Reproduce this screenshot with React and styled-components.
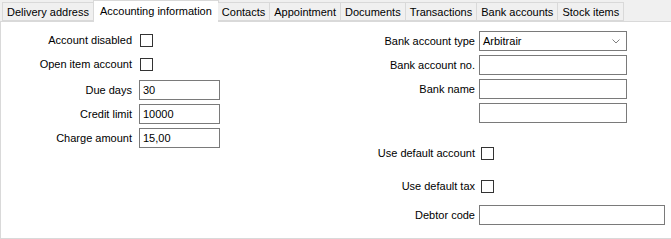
import React from "react";
import styled, { createGlobalStyle } from "styled-components";

const GlobalStyle = createGlobalStyle`
  html, body {
    margin: 0;
    padding: 0;
    background: #f0f0f0;
  }
  body {
    font-family: "Liberation Sans", Arial, sans-serif;
    font-size: 11px;
    letter-spacing: 0;
    color: #000;
  }
`;

const Window = styled.div`
  width: 671px;
  height: 239px;
  background: #f0f0f0;
  display: flex;
  flex-direction: column;
  overflow: hidden;
`;

const TabBar = styled.div`
  display: flex;
  align-items: flex-end;
  height: 21px;
  padding-left: 2px;
  position: relative;
  z-index: 1;
`;

const Tab = styled.div`
  box-sizing: border-box;
  height: ${(p) => (p.active ? "22px" : "19px")};
  margin-bottom: ${(p) => (p.active ? "-1px" : "0")};
  margin-left: ${(p) => (p.active ? "-1px" : "0")};
  margin-right: ${(p) => (p.active ? "-1px" : "0")};
  padding: 0 ${(p) => (p.active ? "6px" : "4px")};
  display: flex;
  align-items: center;
  padding-bottom: ${(p) => (p.active ? "2px" : "0")};
  background: ${(p) => (p.active ? "#fff" : "#f0f0f0")};
  border: 1px solid #d9d9d9;
  border-bottom: ${(p) => (p.active ? "none" : "1px solid #d9d9d9")};
  border-left: ${(p) => (p.first || p.active ? "1px solid #d9d9d9" : "none")};
  white-space: nowrap;
`;

const Panel = styled.div`
  flex: 1;
  background: #fff;
  border: 1px solid #d9d9d9;
  border-right: none;
  display: flex;
`;

const Column = styled.div`
  width: ${(p) => p.width}px;
  padding-top: ${(p) => p.top}px;
  display: flex;
  flex-direction: column;
`;

const Row = styled.div`
  display: flex;
  align-items: center;
  height: 20px;
  margin-top: ${(p) => p.gap || 0}px;
`;

const Label = styled.div`
  width: ${(p) => p.width}px;
  text-align: right;
  padding-right: ${(p) => p.space}px;
  box-sizing: border-box;
  flex-shrink: 0;
  white-space: nowrap;
`;

const Input = styled.div`
  box-sizing: border-box;
  width: ${(p) => p.width}px;
  height: 20px;
  border: 1px solid #7a7a7a;
  background: #fff;
  padding: 0 3px;
  display: flex;
  align-items: center;
`;

const Select = styled(Input)`
  justify-content: space-between;
  padding-right: 6px;
`;

const Check = styled.div`
  box-sizing: border-box;
  width: 13px;
  height: 13px;
  border: 1px solid #333;
  background: #fff;
  margin-left: ${(p) => p.offset || 0}px;
`;

const Chevron = () => (
  <svg width="8" height="5" viewBox="0 0 8 5">
    <path d="M0.5 0.5 L4 4 L7.5 0.5" fill="none" stroke="#808080" strokeWidth="1" />
  </svg>
);

const tabs = [
  "Delivery address",
  "Accounting information",
  "Contacts",
  "Appointment",
  "Documents",
  "Transactions",
  "Bank accounts",
  "Stock items",
];

export default function App() {
  return (
    <>
      <GlobalStyle />
      <Window>
        <TabBar>
          {tabs.map((t, i) => (
            <Tab key={t} first={i === 0} active={i === 1}>
              {t}
            </Tab>
          ))}
        </TabBar>
        <Panel>
          <Column width={299} top={8}>
            <Row>
              <Label width={138} space={7}>Account disabled</Label>
              <Check offset={1} />
            </Row>
            <Row gap={4}>
              <Label width={138} space={7}>Open item account</Label>
              <Check offset={1} />
            </Row>
            <Row gap={6}>
              <Label width={138} space={7}>Due days</Label>
              <Input width={81}>30</Input>
            </Row>
            <Row gap={4}>
              <Label width={138} space={7}>Credit limit</Label>
              <Input width={81}>10000</Input>
            </Row>
            <Row gap={4}>
              <Label width={138} space={7}>Charge amount</Label>
              <Input width={81}>15,00</Input>
            </Row>
          </Column>
          <Column width={371} top={9}>
            <Row>
              <Label width={179} space={4}>Bank account type</Label>
              <Select width={148}>
                Arbitrair
                <Chevron />
              </Select>
            </Row>
            <Row gap={4}>
              <Label width={179} space={4}>Bank account no.</Label>
              <Input width={148} />
            </Row>
            <Row gap={4}>
              <Label width={179} space={4}>Bank name</Label>
              <Input width={148} />
            </Row>
            <Row gap={4}>
              <Label width={179} space={4}>&nbsp;</Label>
              <Input width={148} />
            </Row>
            <Row gap={20}>
              <Label width={179} space={4}>Use default account</Label>
              <Check offset={2} />
            </Row>
            <Row gap={13}>
              <Label width={179} space={4}>Use default tax</Label>
              <Check offset={2} />
            </Row>
            <Row gap={9}>
              <Label width={179} space={4}>Debtor code</Label>
              <Input width={186} />
            </Row>
          </Column>
        </Panel>
      </Window>
    </>
  );
}
